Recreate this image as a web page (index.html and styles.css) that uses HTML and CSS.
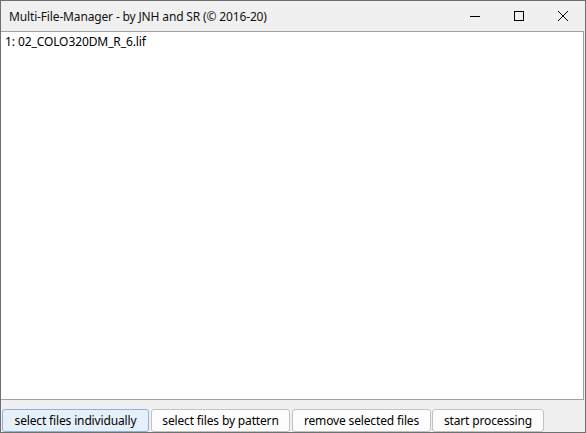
FILE: index.html
```html
<!DOCTYPE html>
<html>
<head>
<meta charset="utf-8">
<link rel="stylesheet" href="styles.css">
</head>
<body>
<div class="window">
  <div class="titlebar">
    <div class="title">Multi-File-Manager - by JNH and SR (© 2016-20)</div>
    <div class="caption">
      <div class="cbtn"><svg width="10" height="10" viewBox="0 0 10 10"><path d="M0 5.5h10" stroke="#000" stroke-width="1" fill="none"/></svg></div>
      <div class="cbtn"><svg width="10" height="10" viewBox="0 0 10 10"><rect x="0.5" y="0.5" width="9" height="9" stroke="#000" stroke-width="1" fill="none"/></svg></div>
      <div class="cbtn"><svg width="10" height="10" viewBox="0 0 10 10"><path d="M0 0L10 10M10 0L0 10" stroke="#000" stroke-width="1" fill="none"/></svg></div>
    </div>
  </div>
  <div class="list">
    <div class="item">1: 02_COLO320DM_R_6.lif</div>
  </div>
  <div class="bottom">
    <button class="btn focus b1">select files individually</button>
    <button class="btn b2">select files by pattern</button>
    <button class="btn b3">remove selected files</button>
    <button class="btn b4">start processing</button>
  </div>
</div>
</body>
</html>
```

FILE: styles.css
```css
html, body {
  margin: 0;
  padding: 0;
  background: #ffffff;
}
.window {
  width: 586px;
  height: 433px;
  box-sizing: border-box;
  border: 1px solid #6f6f6f;
  display: flex;
  flex-direction: column;
  background: #f0f0f0;
  font-family: "Noto Sans", "Open Sans", sans-serif;
  color: #000;
  overflow: hidden;
}
.titlebar {
  height: 30px;
  display: flex;
  align-items: center;
  background: #f0f0f0;
  flex: none;
}
.title {
  flex: 1;
  padding-left: 8px;
  font-size: 12px;
  letter-spacing: -0.15px;
  padding-top: 1px;
  color: #111;
}
.caption {
  display: flex;
  height: 30px;
}
.cbtn {
  width: 44px;
  display: flex;
  align-items: center;
  justify-content: center;
}
.list {
  flex: none;
  height: 367px;
  background: #ffffff;
  border-top: 1px solid #a0a0a0;
  border-bottom: 1px solid #a0a0a0;
  border-right: 1px solid #a0a0a0;
  margin-right: 1px;
}
.item {
  font-size: 12px;
  padding: 2px 4px;
  line-height: 16px;
  letter-spacing: -0.1px;
}
.bottom {
  flex: 1;
  display: flex;
  align-items: flex-end;
  gap: 1px;
  padding-left: 1px;
}
.btn {
  height: 23px;
  box-sizing: border-box;
  border: 1px solid #c2c2c2;
  border-radius: 3px;
  background: #fdfdfd;
  font-family: "Noto Sans", "Open Sans", sans-serif;
  font-size: 12px;
  letter-spacing: -0.15px;
  color: #000;
  padding: 1px 0 0 0;
  margin: 0;
  line-height: 20px;
}
.focus {
  background: #e5f0fb;
  border-color: #8fb0dc;
}
.b1 { width: 147px; }
.b2 { width: 139px; margin-left: 1px; }
.b3 { width: 139px; margin-left: 1px; }
.b4 { width: 112px; }
```
